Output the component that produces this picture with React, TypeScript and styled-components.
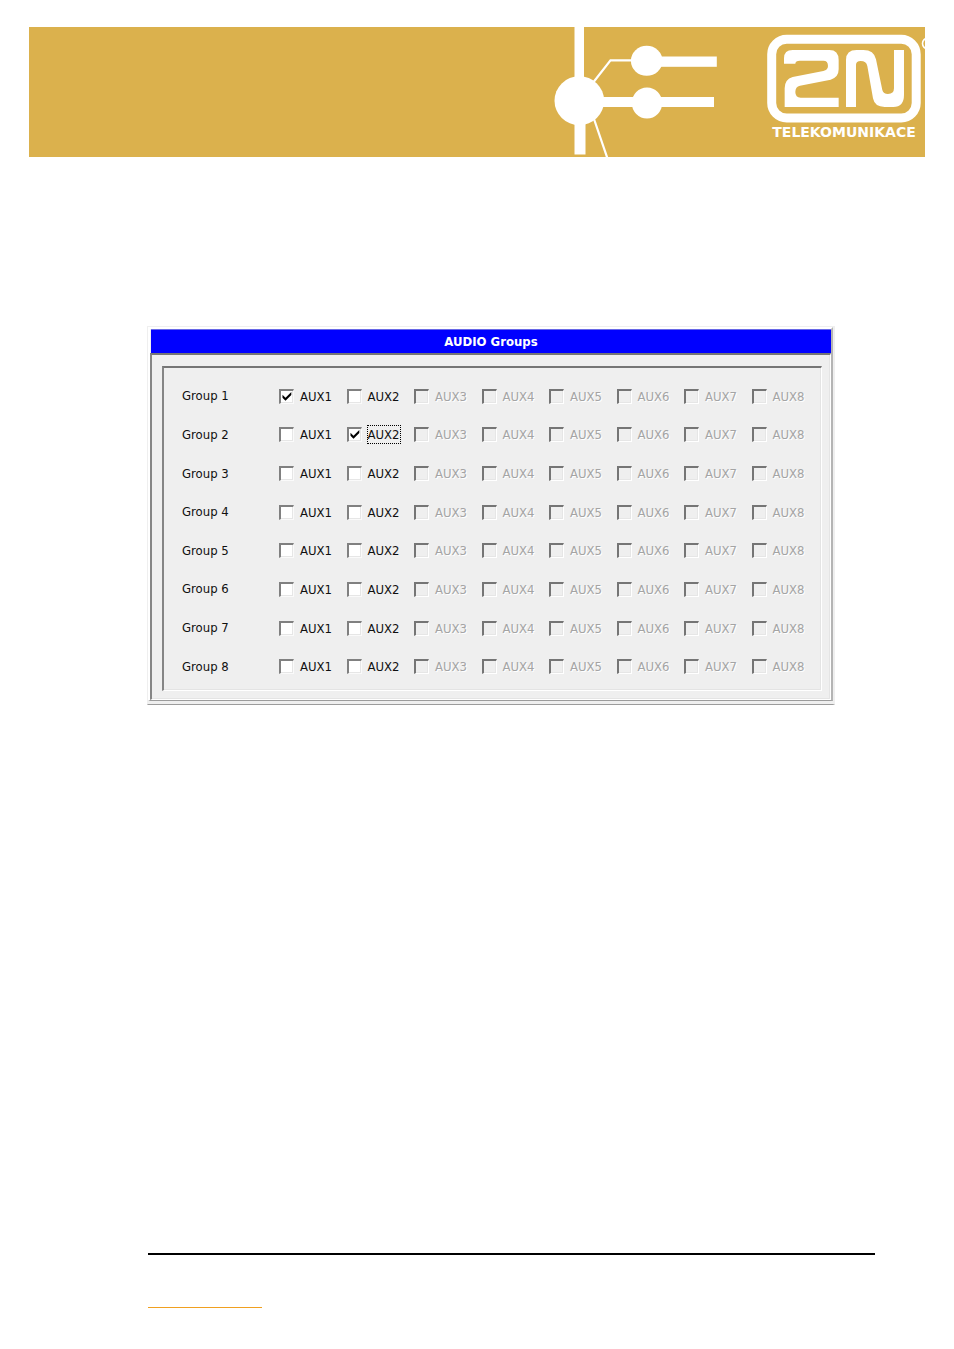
import React from "react";
import styled, { createGlobalStyle } from "styled-components";

const GlobalStyle = createGlobalStyle`
  * { box-sizing: border-box; }
  body {
    margin: 0;
    background: #ffffff;
    font-family: "DejaVu Sans Condensed", "DejaVu Sans", sans-serif;
    font-stretch: condensed;
    font-size: 13px;
    line-height: 16px;
    color: #101010;
  }
`;

const Page = styled.div`
  min-height: 100vh;
  display: flex;
  flex-direction: column;
`;

const Banner = styled.header`
  margin: 27px 29px 0;
  height: 130px;
  display: flex;
  justify-content: flex-end;
  background: #dbb14d;
  overflow: hidden;
`;

const BannerArt = styled.svg`
  flex: none;
  width: 375px;
  height: 130px;
`;

const BrandName = styled.text`
  font-family: "DejaVu Sans", sans-serif;
  font-size: 14px;
  font-weight: 700;
  font-stretch: normal;
  fill: #ffffff;
`;

const Content = styled.main`
  padding: 169px 119px 40px 147px;
`;

const Window = styled.section`
  background: #efefef;
  border: 1px solid #efefef;
  border-right-width: 2px;
  border-bottom: 1px solid #9c9c9c;
  padding-bottom: 3px;
`;

const Raised = styled.div`
  border-style: solid;
  border-width: 2px 2px 1px 2px;
  border-color: #ffffff #b4b4b4 #9c9c9c #ffffff;
`;

const TitleBar = styled.h1`
  margin: 0 0 0 1px;
  height: 24px;
  border-top: 1px solid #6868e8;
  background: #0000ff;
  color: #ffffff;
  font-size: 13px;
  font-weight: 700;
  line-height: 24px;
  text-align: center;
`;

const Sunken = styled.div<{ $pad?: string }>`
  border-style: solid;
  border-width: 2px 1px 1px 2px;
  border-color: #757575 #ffffff #ffffff #858585;
  box-shadow: inset -1px -1px 0 #e4e4e4;
  padding: ${(p) => p.$pad};
`;

const Rows = styled.div`
  display: grid;
  grid-auto-rows: 1fr;
  min-height: 309px;
`;

const Row = styled.div`
  display: grid;
  grid-template-columns: 97px repeat(8, 1fr);
  align-items: center;
`;

const Option = styled.label<{ $disabled: boolean }>`
  position: relative;
  display: flex;
  align-items: center;
  gap: 5px;
  color: ${(p) => (p.$disabled ? "#a4a4a4" : "#101010")};
  text-shadow: ${(p) => (p.$disabled ? "1px 1px 0 #ffffff" : "none")};
`;

const Box = styled.input`
  appearance: none;
  flex: none;
  width: 15px;
  height: 15px;
  margin: 0;
  border-style: solid;
  border-width: 2px 1px 1px 2px;
  border-color: #808080 #fafafa #fafafa #808080;
  background: #ffffff;
  box-shadow: inset -1px -1px 0 #e6e6e6;
  &:disabled {
    background: #efefef;
    border-color: #757575 #ffffff #ffffff #757575;
  }
  & + svg { display: none; }
  &:checked + svg { display: block; }
`;

const Tick = styled.svg`
  position: absolute;
  left: 3px;
  width: 10px;
  height: 9px;
  pointer-events: none;
`;

const Caption = styled.span<{ $focused: boolean }>`
  height: 19px;
  line-height: 17px;
  border: 1px dotted ${(p) => (p.$focused ? "#000000" : "transparent")};
`;

const Footer = styled.footer`
  margin: auto 79px 41px 148px;
`;

const Rule = styled.hr`
  margin: 0 0 52px;
  border: 0;
  height: 2px;
  background: #000000;
`;

const Accent = styled.hr`
  margin: 0;
  border: 0;
  width: 114px;
  height: 1px;
  background: #f0a020;
`;

const groups = [1, 2, 3, 4, 5, 6, 7, 8];
const outputs = [1, 2, 3, 4, 5, 6, 7, 8];

function Logo() {
  return (
    <BannerArt viewBox="550 27 375 130" role="img" aria-label="2N Telekomunikace">
      <g fill="#ffffff">
        <rect x="574.5" y="27" width="9.5" height="60" />
        <rect x="574.5" y="115" width="11" height="39.5" />
        <ellipse cx="579.3" cy="100.7" rx="24.8" ry="24.5" />
        <ellipse cx="646.7" cy="60.8" rx="15.8" ry="15" />
        <ellipse cx="647" cy="103" rx="15.2" ry="15.5" />
        <rect x="655" y="56.5" width="61.8" height="10.3" />
        <rect x="600" y="97" width="114" height="10" />
      </g>
      <path d="M592 84 L610.5 60.3 H634 M594 119 L608 160" fill="none" stroke="#ffffff" strokeWidth="2.2" />
      <rect x="771.7" y="39.2" width="144.5" height="78.8" rx="15" fill="none" stroke="#ffffff" strokeWidth="9" />
      <g transform="translate(750 20) scale(0.3333)" fill="#ffffff">
        <path d="M102 131V115Q102 90 128 90H238Q266 90 266 120V148Q266 172 242 179L150 197Q136 200 136 216Q136 233 152 233H266V261H104V205Q104 178 128 171L220 153Q234 150 234 138Q234 122 220 122H150Q136 122 136 131Z" />
        <path d="M288 261V120Q288 90 320 90H340Q372 90 378 118L397 210Q400 222 414 222Q432 222 432 205V90H462V225Q462 261 430 261H404Q374 261 369 235L352 138Q349 123 332 123Q318 123 318 135V261Z" />
      </g>
      <circle cx="928" cy="43.5" r="5.5" fill="none" stroke="#ffffff" strokeWidth="1.6" />
      <BrandName x="844" y="137" textAnchor="middle">TELEKOMUNIKACE</BrandName>
    </BannerArt>
  );
}

export default function App() {
  return (
    <Page>
      <GlobalStyle />
      <Banner>
        <Logo />
      </Banner>
      <Content>
        <Window>
          <Raised>
            <TitleBar>AUDIO Groups</TitleBar>
            <Sunken $pad="11px 8px 8px 10px">
              <Sunken $pad="9px 2px 4px 18px">
                <Rows>
                  {groups.map((g) => (
                    <Row key={g} role="group" aria-label={`Group ${g}`}>
                      <span>Group {g}</span>
                      {outputs.map((o) => (
                        <Option key={o} $disabled={o > 2}>
                          <Box
                            type="checkbox"
                            disabled={o > 2}
                            defaultChecked={g === o && o <= 2}
                          />
                          <Tick viewBox="0 0 10 9" aria-hidden="true">
                            <path d="M0.5 2.8V5.8L3.5 8.8L9.3 3V0L3.5 5.8Z" fill="#000000" />
                          </Tick>
                          <Caption $focused={g === 2 && o === 2}>AUX{o}</Caption>
                        </Option>
                      ))}
                    </Row>
                  ))}
                </Rows>
              </Sunken>
            </Sunken>
          </Raised>
        </Window>
      </Content>
      <Footer>
        <Rule />
        <Accent />
      </Footer>
    </Page>
  );
}
